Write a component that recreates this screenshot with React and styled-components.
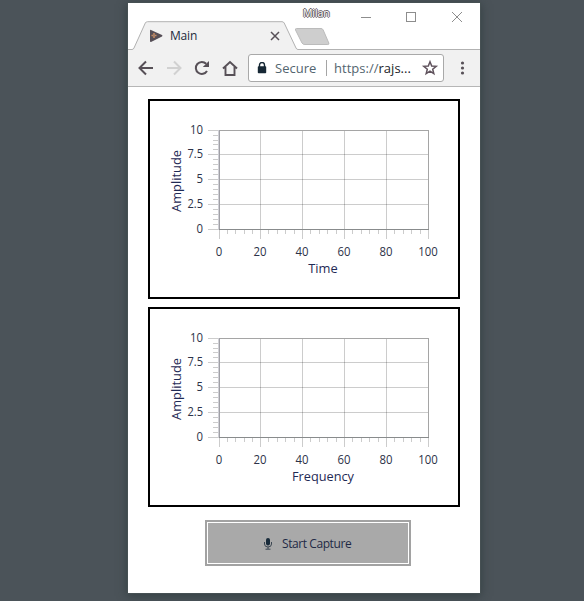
import React from "react";
import styled, { createGlobalStyle } from "styled-components";

const GlobalStyle = createGlobalStyle`
  * { box-sizing: border-box; }
  html, body { margin: 0; height: 100%; background: #4b5359; overflow: hidden; }
  body { font-family: "Open Sans", "Noto Sans", sans-serif; }
  svg { display: block; flex: none; }
`;

const Desktop = styled.div`
  width: 584px;
  height: 601px;
  padding: 3px 0 0 128px;
  background: #4b5359;
`;

const BrowserWindow = styled.main`
  width: 352px;
  height: 590px;
  background: #fff;
  box-shadow: 0 0 0 1px #465053, 0 2px 9px 1px rgba(40, 54, 56, 0.65);
`;

const TitleBar = styled.header`
  position: relative;
  height: 47px;
`;

const TabOutline = styled.svg`
  position: absolute;
  inset: 0;
`;

const TitleRow = styled.div`
  position: relative;
  display: flex;
  height: 100%;
`;

const Tab = styled.div`
  display: flex;
  align-items: center;
  width: 174px;
  height: 27px;
  margin-top: 19px;
  padding-left: 21px;
`;

const TabTitle = styled.span`
  width: 100px;
  margin-left: 7px;
  font-size: 12px;
  line-height: 18px;
  letter-spacing: -0.2px;
  color: #222b3c;
`;

const UserName = styled.span`
  width: 30px;
  margin: 2px 0 0 1px;
  font-size: 10.5px;
  line-height: 16px;
  letter-spacing: -0.1px;
  color: #fff;
  text-shadow: -1px 0 #62585e, 1px 0 #62585e, 0 -1px #62585e, 0 1px #62585e;
`;

const WindowControls = styled.svg`
  margin-left: 27px;
`;

const Toolbar = styled.nav`
  display: flex;
  align-items: center;
  height: 37px;
  background: #f1f1f1;
  border-bottom: 1px solid #b6b6b6;
`;

const AddressBar = styled.div`
  display: flex;
  align-items: center;
  width: 196px;
  height: 28px;
  padding-left: 8px;
  background: #fff;
  border: 1px solid #a9a9a9;
  border-radius: 3px;
`;

const AddressText = styled.span`
  width: ${(p) => p.$width}px;
  font-size: 13px;
  line-height: 20px;
  letter-spacing: ${(p) => p.$spacing || 0}px;
  white-space: nowrap;
  color: #53656f;
  b { font-weight: 400; color: #1b1d29; }
`;

const Divider = styled.i`
  width: 1px;
  height: 16px;
  margin-right: 7px;
  background: #a5a5a5;
`;

const SecurityStatus = styled.div`
  display: flex;
  align-items: center;
  gap: 8px;
  width: 69px;
`;

const Content = styled.section`
  display: flex;
  flex-direction: column;
  align-items: center;
  gap: 8px;
  padding-top: 12px;
`;

const ChartPanel = styled.figure`
  width: 312px;
  height: 200px;
  margin: 0;
  border: 2px solid #000;
`;

const AxisText = styled.text`
  font-family: "Open Sans", "Noto Sans", sans-serif;
  font-size: ${(p) => (p.$title ? 12.5 : 12)}px;
  fill: ${(p) => (p.$title ? "#1f2a55" : "#2c3248")};
`;

const CaptureButton = styled.button`
  display: flex;
  align-items: center;
  width: 206px;
  height: 46px;
  margin: 5px 0 0 8px;
  padding: 2px 0 0 55px;
  border: 2px solid #a2a2a2;
  box-shadow: inset 0 0 0 1px #fff;
  background: #a9a9a9;
  font-family: "Open Sans", "Noto Sans", sans-serif;
  font-size: 12px;
  letter-spacing: -0.42px;
  color: #1f2946;
  white-space: nowrap;
`;

const ButtonLabel = styled.span`
  margin-left: 8px;
  line-height: 18px;
`;

const X_TICKS = [
  { label: "0", x: 69, w: 6.5 },
  { label: "20", x: 110, w: 13 },
  { label: "40", x: 152, w: 13 },
  { label: "60", x: 194, w: 13 },
  { label: "80", x: 236, w: 13 },
  { label: "100", x: 278, w: 19.5 },
];
const Y_TICKS = [
  { label: "10", y: 29, w: 13 },
  { label: "7.5", y: 53, w: 15.5 },
  { label: "5", y: 78, w: 6.5 },
  { label: "2.5", y: 103, w: 15.5 },
  { label: "0", y: 128, w: 6.5 },
];
const STEPS = [1, 2, 3, 4];

function Chart({ title, titleWidth }) {
  return (
    <ChartPanel>
      <svg width="308" height="196" shapeRendering="crispEdges">
        <g fill="#000" fillOpacity="0.2">
          {X_TICKS.slice(1, 5).map((t) => <rect key={t.label} x={t.x} y="29" width="1" height="109" />)}
          {[69, 278].map((x) => <rect key={x} x={x} y="129" width="1" height="9" />)}
          {Y_TICKS.slice(1, 4).map((t) => <rect key={t.label} x="58" y={t.y} width="221" height="1" />)}
          {[29, 128].map((y) => <rect key={y} x="58" y={y} width="11" height="1" />)}
          {X_TICKS.slice(0, 5).map((t, i) => STEPS.map((s) => (
            <rect key={`${i}-${s}`} x={Math.round(t.x + ((X_TICKS[i + 1].x - t.x) * s) / 5)} y="129" width="1" height="4" />
          )))}
          {Y_TICKS.slice(0, 4).map((t, i) => STEPS.map((s) => (
            <rect key={`${i}-${s}`} x="63" y={Math.round(t.y + ((Y_TICKS[i + 1].y - t.y) * s) / 5)} width="5" height="1" />
          )))}
        </g>
        <rect x="69" y="29" width="210" height="1" fill="#a5a5a5" />
        <rect x="278" y="29" width="1" height="100" fill="#a5a5a5" />
        <rect x="68" y="29" width="1" height="100" fill="#d0d0d6" />
        <rect x="69" y="29" width="1" height="100" fill="#a0a0a6" />
        <rect x="69" y="128" width="210" height="1" fill="#888b8c" />
        <g textAnchor="middle">
          {X_TICKS.map((t) => (
            <AxisText key={t.label} x={t.x} y="155" textLength={t.w} lengthAdjust="spacingAndGlyphs">{t.label}</AxisText>
          ))}
          <AxisText $title x="173" y="172" textLength={titleWidth} lengthAdjust="spacingAndGlyphs">{title}</AxisText>
          <AxisText $title transform="translate(31 80) rotate(-90)" textLength="62" lengthAdjust="spacingAndGlyphs">Amplitude</AxisText>
        </g>
        <g textAnchor="end">
          {Y_TICKS.map((t) => (
            <AxisText key={t.label} x="53" y={t.y + 4} textLength={t.w} lengthAdjust="spacingAndGlyphs">{t.label}</AxisText>
          ))}
        </g>
      </svg>
    </ChartPanel>
  );
}

function Favicon() {
  return (
    <svg width="14" height="14" viewBox="0 0 14 14">
      <path d="M1 1.7Q1 .6 2 .9L13 6Q14 6.8 13 7.6L2 12.9Q1 13.1 1 12Z" fill="#564f57" />
      <path d="M2.5 6.5h5M5 4v5" stroke="#c78b60" strokeWidth="1.5" />
      <path d="M4.3 6.5h1.4" stroke="#84818b" strokeWidth="1.2" />
    </svg>
  );
}

function NavIcons() {
  return (
    <svg width="120" height="36" fill="none" stroke="#575057" strokeWidth="2">
      <path d="M25 18H12M18 11.5L11.5 18L18 24.5" />
      <path d="M39 18h13M46 11.5L52.5 18L46 24.5" stroke="#d1d1d1" />
      <path d="M79 21A6 6 0 1 1 78.2 13.8" />
      <path d="M81 11v6h-6.2Z" fill="#575057" stroke="none" />
      <path d="M95 18.5L102 12L109 18.5M97.5 17v8h9v-8" strokeWidth="1.9" />
    </svg>
  );
}

export default function App() {
  return (
    <>
      <GlobalStyle />
      <Desktop>
        <BrowserWindow>
          <TitleBar>
            <TabOutline width="352" height="47">
              <path d="M0 47V46.5H5L17.3 20Q18 18.7 19.5 18.7H154Q155.5 18.7 156.2 20L169 46.5V47Z" fill="#f1f1f1" />
              <path d="M0 46.5H4Q5.4 46.5 6 45L17.3 20Q18 18.7 19.5 18.7H154Q155.5 18.7 156.2 20L168 45Q168.7 46.5 170 46.5H352" fill="none" stroke="#b2b2b2" />
              <path d="M168.5 25.5H193Q194.6 25.5 195.2 27L200.8 40Q201.4 41.5 199.8 41.5H177Q174.8 41.5 174 40L167.5 27Q167 25.5 168.5 25.5Z" fill="#cecece" stroke="#bbb" />
            </TabOutline>
            <TitleRow>
              <Tab>
                <Favicon />
                <TabTitle>Main</TabTitle>
                <svg width="10" height="10" stroke="#575057" strokeWidth="1.5">
                  <path d="M1 1l8 8M9 1l-8 8" />
                </svg>
              </Tab>
              <UserName>Milan</UserName>
              <WindowControls width="110" height="30" fill="none" stroke="#8d8d8d">
                <path d="M1 14.5h10" />
                <rect x="46.5" y="9.5" width="9" height="9" />
                <path d="M92 9l10 10M102 9l-10 10" />
              </WindowControls>
            </TitleRow>
          </TitleBar>
          <Toolbar>
            <NavIcons />
            <AddressBar>
              <SecurityStatus>
                <svg width="10" height="12" viewBox="0 0 10 12">
                  <path d="M2.5 5V3a2.5 2.5 0 0 1 5 0v2" fill="none" stroke="#172835" strokeWidth="1.4" />
                  <rect x=".8" y="4.3" width="8.4" height="7" rx=".8" fill="#172835" />
                </svg>
                <AddressText $width={50}>Secure</AddressText>
              </SecurityStatus>
              <Divider />
              <AddressText $width={87} $spacing={0.02}>https://<b>rajs...</b></AddressText>
              <svg width="18" height="18" viewBox="0 0 18 18" fill="none" stroke="#60535d" strokeWidth="1.5">
                <path d="M9 2.8l1.7 4.2 4.5.3-3.5 2.9 1.1 4.4L9 12.2l-3.8 2.4 1.1-4.4-3.5-2.9 4.5-.3Z" />
              </svg>
            </AddressBar>
            <svg width="36" height="36" fill="#575057">
              <circle cx="18.5" cy="13" r="1.6" />
              <circle cx="18.5" cy="18" r="1.6" />
              <circle cx="18.5" cy="23" r="1.6" />
            </svg>
          </Toolbar>
          <Content>
            <Chart title="Time" titleWidth={29.5} />
            <Chart title="Frequency" titleWidth={62} />
            <CaptureButton>
              <svg width="12" height="12" viewBox="0 0 12 12" fill="none" stroke="#3b4651" strokeWidth="1">
                <rect x="4" y="0" width="4" height="7.5" rx="2" fill="#182b3a" stroke="none" />
                <path d="M2.5 4v2Q2.5 9 6 9T9.5 6V4M6 9v2M3.5 11.2h5" />
              </svg>
              <ButtonLabel>Start Capture</ButtonLabel>
            </CaptureButton>
          </Content>
        </BrowserWindow>
      </Desktop>
    </>
  );
}
